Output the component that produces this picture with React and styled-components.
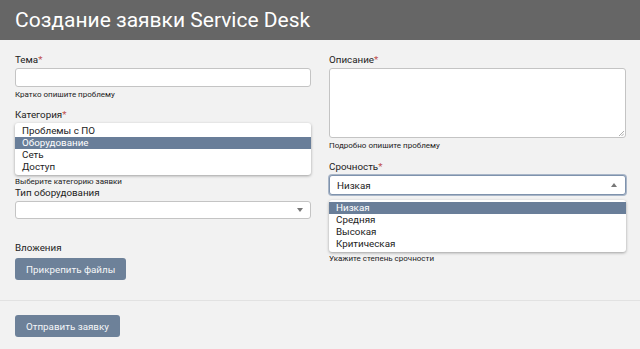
import React from "react";
import styled, { createGlobalStyle } from "styled-components";

const Global = createGlobalStyle`
  html, body { margin: 0; padding: 0; background: #f2f2f2; }
  body { font-family: Roboto, "Noto Sans", Arial, sans-serif; color: #222; }
  * { box-sizing: border-box; }
`;

const Page = styled.div`
  width: 640px;
  height: 349px;
  overflow: hidden;
  background: #f2f2f2;
`;

const Header = styled.header`
  height: 40px;
  background: #666666;
  display: flex;
  align-items: center;
  padding: 0 15px;
`;

const Title = styled.h1`
  margin: 0;
  font-size: 21px;
  font-weight: 400;
  color: #fff;
`;

const Form = styled.div`
  padding: 13px 14px 0 15px;
  display: grid;
  grid-template-columns: 296px 297px;
  column-gap: 18px;
`;

const Column = styled.div`
  display: flex;
  flex-direction: column;
`;

const Label = styled.label`
  font-size: 9.8px;
  line-height: ${(p) => p.$lh || 13}px;
  margin-top: ${(p) => p.$mt || 0}px;
  margin-bottom: 2px;
  color: #222;
`;

const Req = styled.span`
  color: #c0504d;
`;

const Input = styled.div`
  height: 19px;
  background: #fff;
  border: 1px solid #c4c4c4;
  border-radius: 3px;
`;

const TextArea = styled.div`
  position: relative;
  height: 70px;
  background: #fff;
  border: 1px solid #c4c4c4;
  border-radius: 3px;
`;

const Grip = styled.svg`
  position: absolute;
  right: 1px;
  bottom: 1px;
`;

const Hint = styled.div`
  font-size: 8px;
  line-height: 10px;
  margin-top: ${(p) => (p.$mt === undefined ? 3 : p.$mt)}px;
  color: #222;
`;

const ListBox = styled.div`
  background: #fff;
  border-radius: 3px;
  box-shadow: 0 1px 3px rgba(0, 0, 0, 0.35);
  padding: 2px 0;
  margin-top: ${(p) => p.$mt || 0}px;
`;

const Option = styled.div`
  height: 12px;
  line-height: 12px;
  font-size: 9.8px;
  padding-left: 7px;
  background: ${(p) => (p.$active ? "#697e99" : "transparent")};
  color: ${(p) => (p.$active ? "#fff" : "#222")};
`;

const Select = styled.div`
  height: ${(p) => p.$h || 18}px;
  background: #fff;
  border: 1px solid ${(p) => (p.$focus ? "#7f93ad" : "#c4c4c4")};
  box-shadow: ${(p) => (p.$focus ? "0 0 0 1px #a9b6c8" : "none")};
  border-radius: 3px;
  display: flex;
  align-items: center;
  justify-content: space-between;
  padding: 0 ${(p) => p.$pr || 7}px 0 7px;
  font-size: 9.8px;
  color: #222;
`;

const Arrow = styled.span`
  width: 0;
  height: 0;
  border-left: 3.5px solid transparent;
  border-right: 3.5px solid transparent;
  ${(p) =>
    p.$up
      ? "border-bottom: 4px solid #777;"
      : "border-top: 4px solid #777;"}
`;

const Button = styled.button`
  align-self: flex-start;
  height: 22px;
  padding: 0 11px;
  border: none;
  border-radius: 3px;
  background: #6d8199;
  color: #f4f6f8;
  font-family: Roboto, Arial, sans-serif;
  font-size: 9.8px;
  margin-top: ${(p) => p.$mt || 0}px;
`;

const Divider = styled.hr`
  margin: 20px 0 0;
  border: none;
  border-top: 1px solid #e2e2e2;
`;

const Footer = styled.div`
  padding: 14px 15px 0;
  display: flex;
`;

export default function App() {
  return (
    <Page>
      <Global />
      <Header>
        <Title>Создание заявки Service Desk</Title>
      </Header>
      <Form>
        <Column>
          <Label>
            Тема<Req>*</Req>
          </Label>
          <Input />
          <Hint>Кратко опишите проблему</Hint>
          <Label $mt={8}>
            Категория<Req>*</Req>
          </Label>
          <ListBox>
            <Option>Проблемы с ПО</Option>
            <Option $active>Оборудование</Option>
            <Option>Сеть</Option>
            <Option>Доступ</Option>
          </ListBox>
          <Hint $mt={2}>Выберите категорию заявки</Hint>
          <Label $lh={12}>Тип оборудования</Label>
          <Select>
            <span />
            <Arrow />
          </Select>
          <Label $mt={22}>Вложения</Label>
          <Button $mt={2}>Прикрепить файлы</Button>
        </Column>
        <Column>
          <Label>
            Описание<Req>*</Req>
          </Label>
          <TextArea>
            <Grip width="6" height="6" viewBox="0 0 6 6">
              <path d="M1 6 L6 1 M3.5 6 L6 3.5" stroke="#999" strokeWidth="0.8" />
            </Grip>
          </TextArea>
          <Hint>Подробно опишите проблему</Hint>
          <Label $mt={9}>
            Срочность<Req>*</Req>
          </Label>
          <Select $focus $h={20} $pr={8}>
            <span>Низкая</span>
            <Arrow $up />
          </Select>
          <ListBox $mt={5}>
            <Option $active>Низкая</Option>
            <Option>Средняя</Option>
            <Option>Высокая</Option>
            <Option>Критическая</Option>
          </ListBox>
          <Hint $mt={2}>Укажите степень срочности</Hint>
        </Column>
      </Form>
      <Divider />
      <Footer>
        <Button>Отправить заявку</Button>
      </Footer>
    </Page>
  );
}
